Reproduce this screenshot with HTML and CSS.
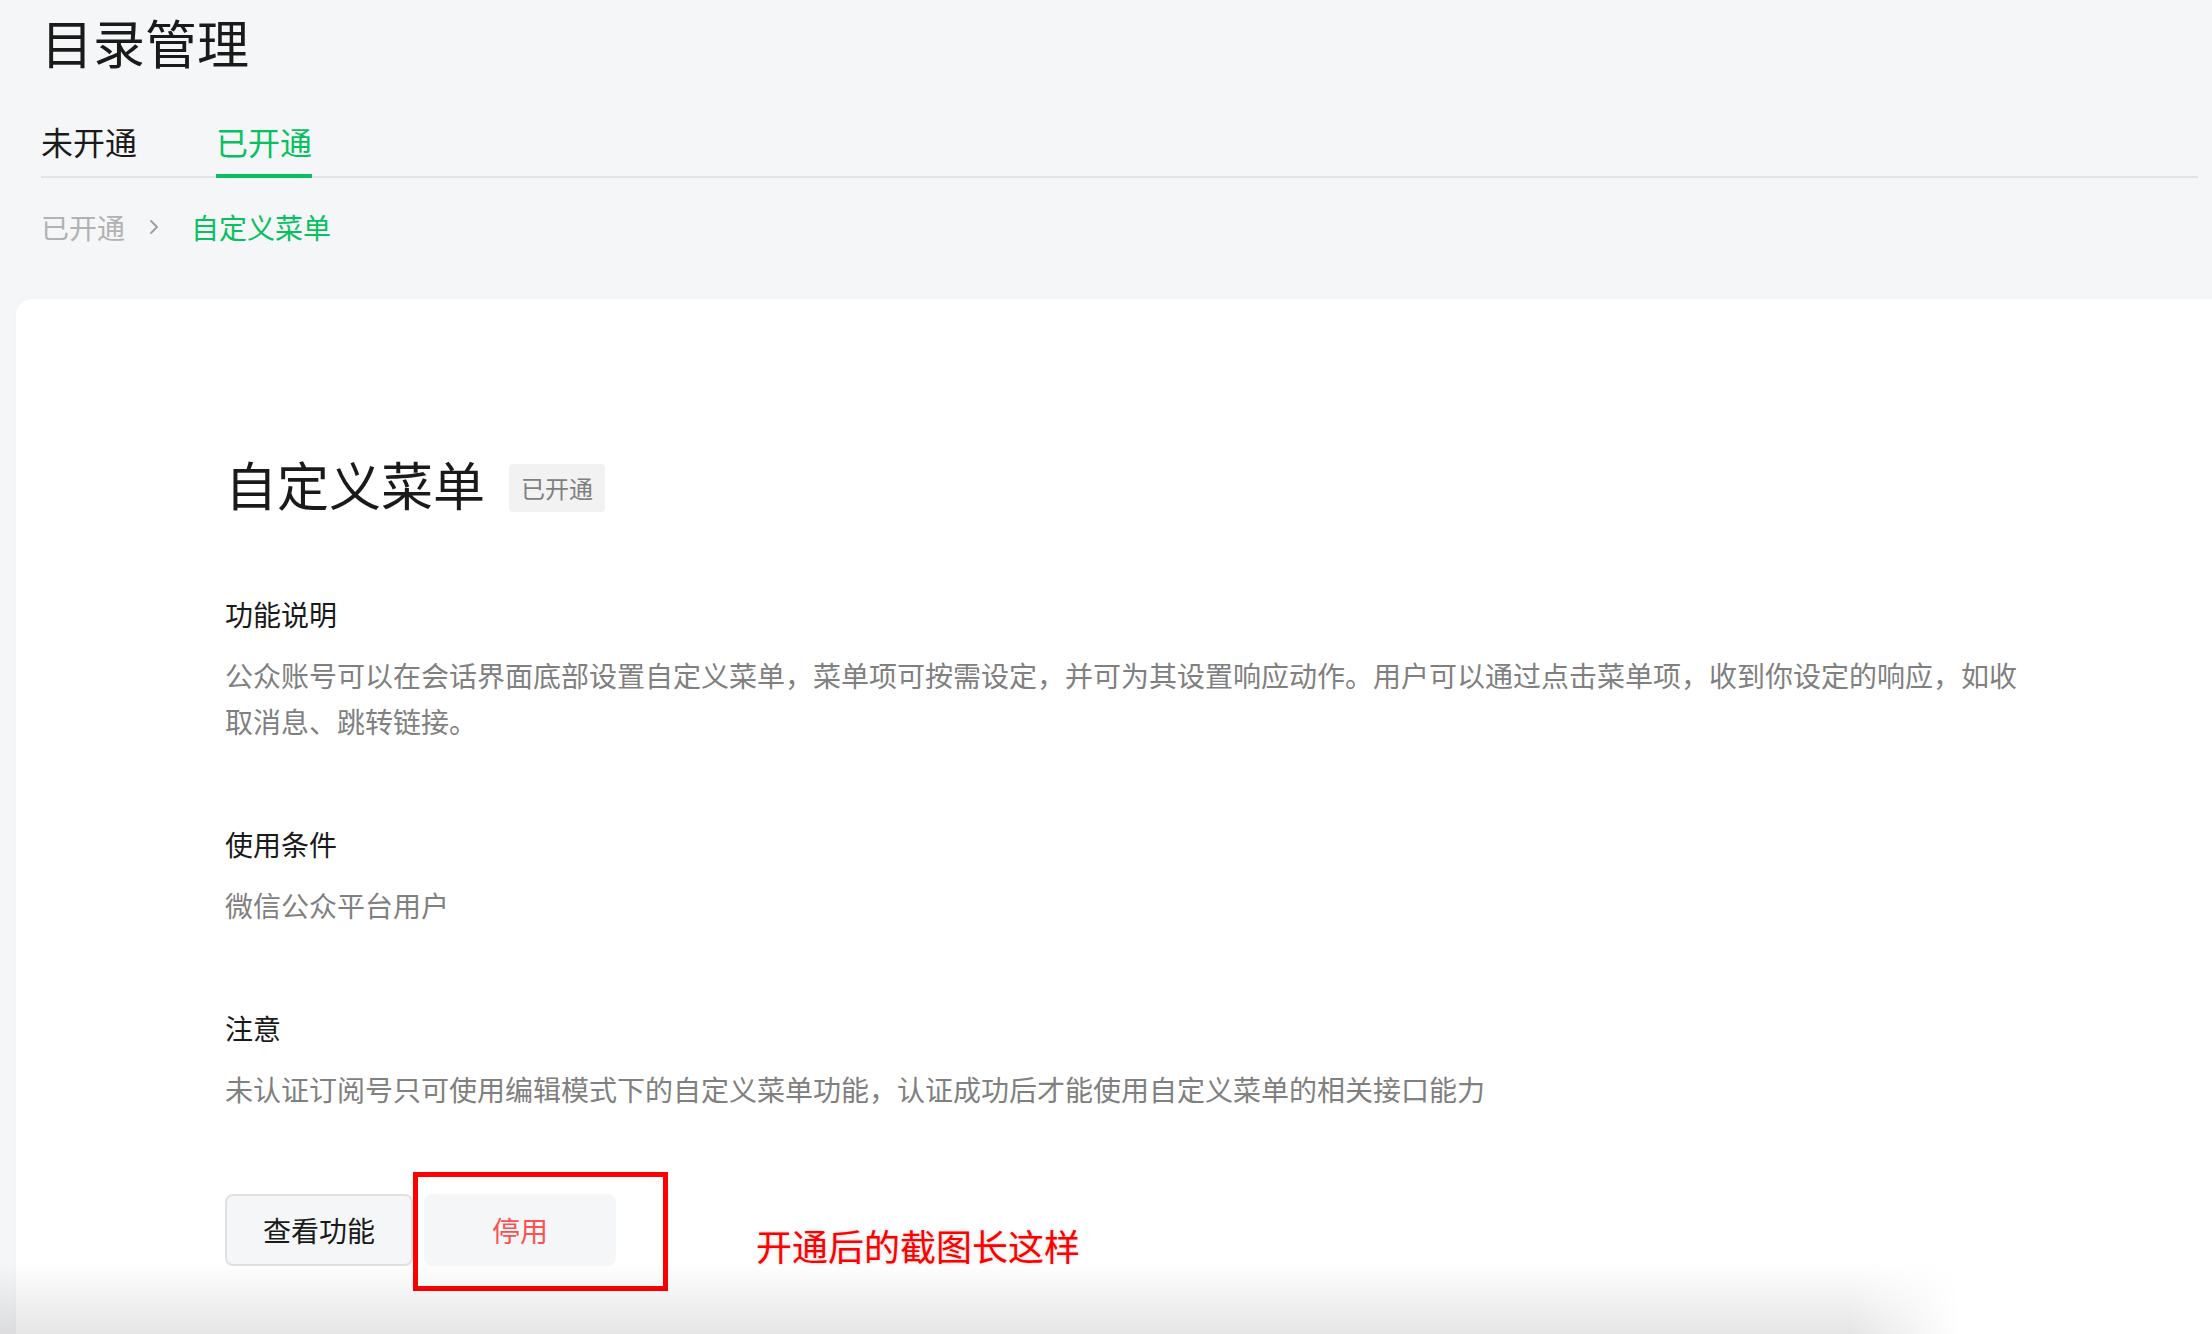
FILE: index.html
```html
<!DOCTYPE html>
<html lang="zh-CN">
<head>
<meta charset="utf-8">
<title>目录管理</title>
<link rel="stylesheet" href="styles.css">
</head>
<body>
<div class="page">
  <h1 class="page-title">目录管理</h1>
  <div class="tabs">
    <div class="tab">未开通</div>
    <div class="tab active">已开通</div>
  </div>
  <div class="crumbs">
    <span class="crumb">已开通</span>
    <svg class="crumb-sep" width="10" height="16" viewBox="0 0 10 16"><polyline points="2,2 8,8 2,14" fill="none" stroke="#9e9e9e" stroke-width="1.8" stroke-linecap="round" stroke-linejoin="round"/></svg>
    <span class="crumb current">自定义菜单</span>
  </div>
</div>
<div class="card">
  <div class="card-head">
    <h2 class="card-title">自定义菜单</h2>
    <span class="badge">已开通</span>
  </div>
  <div class="section">
    <h3 class="section-title">功能说明</h3>
    <p class="section-text">公众账号可以在会话界面底部设置自定义菜单，菜单项可按需设定，并可为其设置响应动作。用户可以通过点击菜单项，收到你设定的响应，如收取消息、跳转链接。</p>
  </div>
  <div class="section">
    <h3 class="section-title">使用条件</h3>
    <p class="section-text">微信公众平台用户</p>
  </div>
  <div class="section">
    <h3 class="section-title">注意</h3>
    <p class="section-text">未认证订阅号只可使用编辑模式下的自定义菜单功能，认证成功后才能使用自定义菜单的相关接口能力</p>
  </div>
  <div class="actions">
    <button class="btn">查看功能</button>
    <button class="btn btn-danger">停用</button>
    <div class="mark-box"></div>
    <div class="mark-text">开通后的截图长这样</div>
  </div>
</div>
<div class="bottom-shade"></div>
</body>
</html>
```
FILE: styles.css
```css
html, body {
  margin: 0;
  height: 100%;
  overflow: hidden;
  background: #f5f6f8;
}
body {
  display: flex;
  flex-direction: column;
  font-family: "Noto Sans CJK SC", "Noto Sans", sans-serif;
  color: #1a1a1a;
}
.page {
  padding: 12px 14px 0 41px;
}
.page-title {
  margin: 0;
  font-size: 52px;
  line-height: 60px;
  font-weight: 400;
  color: #1a1a1a;
}
.tabs {
  display: flex;
  gap: 79px;
  margin-top: 47px;
  border-bottom: 2px solid #e2e3e5;
}
.tab {
  font-size: 32px;
  line-height: 44px;
  padding-bottom: 11px;
  border-bottom: 4px solid transparent;
  margin-bottom: -2px;
  color: #1a1a1a;
}
.tab.active {
  color: #07c160;
  border-bottom-color: #07c160;
}
.crumbs {
  display: flex;
  align-items: center;
  margin-top: 29px;
  font-size: 28px;
  line-height: 40px;
}
.crumb {
  color: #b2b2b2;
}
.crumb.current {
  color: #07c160;
}
.crumb-sep {
  margin: 0 32px 0 24px;
}
.card {
  flex: 1;
  min-height: 0;
  overflow: hidden;
  margin: 52px -20px 0 16px;
  background: #fff;
  border-radius: 16px 16px 0 0;
  padding: 155px 0 0 209px;
  box-shadow: 0 -2px 10px rgba(0, 0, 0, 0.015);
}
.card-head {
  display: flex;
  align-items: flex-start;
}
.card-title {
  margin: 0;
  font-size: 52px;
  line-height: 60px;
  font-weight: 400;
  color: #1a1a1a;
}
.badge {
  margin: 10px 0 0 24px;
  height: 48px;
  line-height: 48px;
  padding: 0 12px;
  font-size: 24px;
  color: #7f7f7f;
  background: #f2f2f2;
  border-radius: 4px;
}
.section {
  margin-top: 80px;
}
.section-title {
  margin: 0;
  font-size: 28px;
  line-height: 40px;
  font-weight: 400;
  color: #1a1a1a;
}
.section-text {
  margin: 18px 0 0;
  font-size: 28px;
  line-height: 46px;
  color: #808080;
  max-width: 1800px;
}
.actions {
  position: relative;
  display: flex;
  gap: 11px;
  margin-top: 82px;
}
.btn {
  height: 72px;
  padding: 0 36px;
  border: 2px solid #e0e1e3;
  border-radius: 8px;
  background: #f5f6f7;
  font-family: inherit;
  font-size: 28px;
  color: #1a1a1a;
}
.btn-danger {
  border-color: #f5f6f7;
  color: #fa5151;
  padding: 0 66px;
}
.mark-box {
  position: absolute;
  left: 188px;
  top: -22px;
  width: 255px;
  height: 119px;
  box-sizing: border-box;
  border: 5px solid #ff0000;
}
.mark-text {
  position: absolute;
  left: 531px;
  top: 26px;
  font-size: 36px;
  line-height: 50px;
  color: #ff0000;
  white-space: nowrap;
  text-shadow: 0 0 2px rgba(0, 0, 0, 0.16), 0 0 5px rgba(0, 0, 0, 0.12);
}
.bottom-shade {
  position: fixed;
  left: 0;
  bottom: 0;
  width: 1960px;
  height: 72px;
  background: linear-gradient(to bottom, rgba(0, 0, 0, 0), rgba(0, 0, 0, 0.1));
  -webkit-mask-image: linear-gradient(to right, #000 1850px, transparent 1960px);
  mask-image: linear-gradient(to right, #000 1850px, transparent 1960px);
  pointer-events: none;
}
```
